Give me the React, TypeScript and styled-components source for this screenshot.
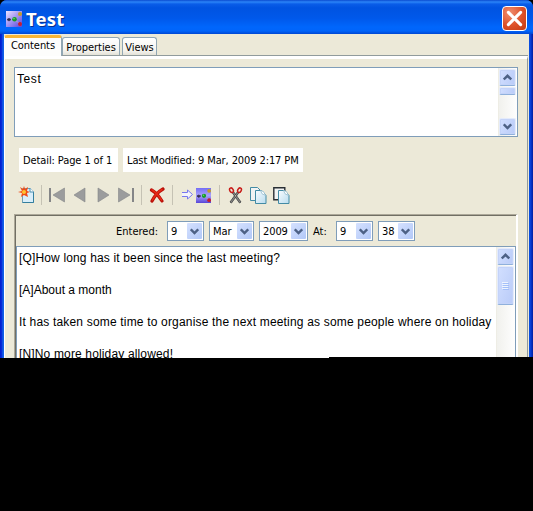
import React from "react";
import styled, { createGlobalStyle } from "styled-components";

const Global = createGlobalStyle`
  * { box-sizing: border-box; }
  html, body { margin: 0; background: #000; overflow: hidden; }
  svg { display: block; flex: none; }
`;

const Screen = styled.main`
  width: 533px;
  height: 511px;
  background: #000;
  color: #000;
  font: 11px/13px "DejaVu Sans Condensed", "DejaVu Sans", sans-serif;
  white-space: nowrap;
  overflow: hidden;
`;

const Window = styled.section`
  width: 533px;
  height: 358px;
  overflow: hidden;
  display: flex;
  flex-direction: column;
  border-radius: 7px 7px 0 0;
  background: #0a48dc;
  clip-path: polygon(0 0, 100% 0, 100% 357px, 329px 357px, 329px 358px, 0 358px);
`;

const TitleBar = styled.header`
  height: 34px;
  flex: none;
  display: flex;
  align-items: center;
  padding: 3px 6px 0 6px;
  background: linear-gradient(#0a4bd0 0, #2b84f8 2px, #0a5de8 4px, #0053e1 8px, #0058ea 18px, #0066fc 27px, #0064fa 31px, #0047d2 34px);
`;

const Title = styled.h1`
  flex: 1;
  margin: 0 0 0 4px;
  color: #fff;
  font: bold 18.5px/24px "Noto Sans", sans-serif;
  letter-spacing: 0.15px;
  text-shadow: 1px 1px 0 #0b2e8c;
`;

const CloseButton = styled.button`
  width: 25px;
  height: 25px;
  padding: 0;
  display: grid;
  place-items: center;
  border: 1px solid #fff;
  border-radius: 4px;
  background: radial-gradient(circle at 30% 25%, #ef8e70, #dd5028 55%, #c43a12);
`;

const Body = styled.div`
  flex: 1;
  min-height: 0;
  display: flex;
  flex-direction: column;
  border-style: solid;
  border-color: #0c50e0;
  border-width: 0 4px;
  border-image: linear-gradient(90deg, #0019cf 0, #0831d9 2px, #166aee 3px, #0855dd 4px, #0855dd 529px, #0b46e2 530px, #001ea0 533px) 0 4 0 4;
  background: #ece9d8;
`;

const Tabs = styled.nav`
  height: 22px;
  flex: none;
  display: flex;
  align-items: flex-end;
  gap: 2px;
  border-bottom: 1px solid #919b9c;
  margin-right: 1px;
`;

const Tab = styled.div<{ $width: number; $active?: boolean }>`
  width: ${(p) => p.$width}px;
  height: ${(p) => (p.$active ? 21 : 18)}px;
  margin-right: ${(p) => (p.$active ? -2 : 0)}px;
  margin-bottom: ${(p) => (p.$active ? -1 : 0)}px;
  padding-top: ${(p) => (p.$active ? 1 : 3)}px;
  text-align: center;
  letter-spacing: -0.05px;
  border: 1px solid #91a7b4;
  border-bottom: 0;
  border-radius: 3px 3px 0 0;
  border-top: ${(p) => (p.$active ? "3px solid #f9b637" : "1px solid #91a7b4")};
  background: ${(p) => (p.$active ? "#fdfdfc" : "linear-gradient(#fff, #f4f3ee 75%, #e3e1d7)")};
  ${(p) => p.$active && "border-left-color: #fff;"}
`;

const Page = styled.div`
  flex: 1;
  min-height: 0;
  display: flex;
  flex-direction: column;
  align-items: flex-start;
  margin-right: 1px;
  padding: 8px 0 0 9px;
  border-top: 3px solid #fff;
  border-left: 1px solid #fff;
  border-right: 1px solid #919b9c;
`;

const SummaryBox = styled.div`
  width: 504px;
  height: 70px;
  flex: none;
  display: flex;
  justify-content: space-between;
  border: 1px solid #7f9db9;
  background: #fff;
`;

const SummaryText = styled.div`
  padding: 4px 2px;
  font: 12px/14px "Liberation Sans", Arial, sans-serif;
  letter-spacing: 0.6px;
`;

const ScrollBar = styled.div`
  width: 19px;
  flex: none;
  display: flex;
  flex-direction: column;
  padding: 1px 1px 0 0;
  border-left: 1px solid #eeede5;
  background: linear-gradient(90deg, #f1f1ed, #fefefe);
`;

const ScrollButton = styled.div<{ $height?: number; $bottom?: boolean }>`
  width: 17px;
  height: ${(p) => p.$height ?? 17}px;
  flex: none;
  display: grid;
  place-items: center;
  margin-top: ${(p) => (p.$bottom ? "auto" : "0")};
  margin-bottom: 1px;
  border: 1px solid #e4ebfb;
  border-bottom-color: #8fb0dc;
  border-radius: 2px;
  box-shadow: inset 0 0 0 1px #c4d3f8;
  background: linear-gradient(110deg, #d2dfff, #b9cbf8);
`;

const Labels = styled.div`
  display: flex;
  gap: 5px;
  margin: 11px 0 0 5px;
`;

const InfoLabel = styled.div<{ $width: number }>`
  width: ${(p) => p.$width}px;
  height: 24px;
  padding: 6px 4px 0;
  letter-spacing: -0.1px;
  background: #fff;
`;

const Toolbar = styled.div`
  height: 42px;
  flex: none;
  display: grid;
  grid-template-columns: 23px 8px 24px 20px 24px 24px 8px 23px 10px 37px 9px 22px 23px 18px;
  align-items: center;
  padding: 4px 0 0 4px;
`;

const Separator = styled.i`
  width: 1px;
  height: 20px;
  background: #c5c2b4;
`;

const Detail = styled.div`
  width: 504px;
  flex: 1;
  min-height: 0;
  display: flex;
  flex-direction: column;
  padding: 1px 0 0 1px;
  border: 1px solid #aca899;
  border-right: 2px solid #fff;
  border-bottom: 0;
  box-shadow: inset 1px 1px 0 #716f64;
`;

const DateRow = styled.div`
  height: 30px;
  flex: none;
  display: flex;
  align-items: center;
  gap: 5px;
  padding-left: 100px;
`;

const DateLabel = styled.span<{ $width: number }>`
  width: ${(p) => p.$width}px;
`;

const Combo = styled.div<{ $width: number }>`
  width: ${(p) => p.$width}px;
  height: 20px;
  display: flex;
  align-items: center;
  justify-content: space-between;
  padding: 0 1px 0 3px;
  border: 1px solid #7f9db9;
  background: #fff;
  letter-spacing: -0.1px;
`;

const ComboArrow = styled.span`
  width: 15px;
  height: 16px;
  display: grid;
  place-items: center;
  border-radius: 1px;
  background: linear-gradient(135deg, #d5e1ff, #b2c8f7);
`;

const Notes = styled.div`
  width: 500px;
  flex: 1;
  min-height: 0;
  display: flex;
  justify-content: space-between;
  border: 1px solid #7f9db9;
  border-bottom: 0;
  background: #fff;
`;

const NoteText = styled.div`
  flex: 1;
  padding: 3px 2px;
  font: 12px/16px "Liberation Sans", Arial, sans-serif;
`;

const NoteLine = styled.p<{ $spacing: number }>`
  margin: 0 0 16px;
  letter-spacing: ${(p) => p.$spacing}px;
`;

const Chevron = ({ up }: { up?: boolean }) => (
  <svg width="9" height="7" viewBox="0 0 9 7">
    <path d={up ? "M.8 5.5 4.5 1.8 8.2 5.5" : "M.8 1.3 4.5 5 8.2 1.3"} fill="none" stroke="#4d6185" strokeWidth="2.4" />
  </svg>
);

const MapIcon = ({ size = 16 }: { size?: number }) => (
  <svg width={size} height={size} viewBox="0 0 16 16">
    <defs>
      <linearGradient id={`mapFill${size}`} x2={size === 16 ? "1" : "0"} y2="1">
        <stop stopColor={size === 16 ? "#eee3ff" : "#746df5"} />
        <stop offset=".5" stopColor={size === 16 ? "#a092f2" : "#aaa3fb"} />
        <stop offset="1" stopColor="#5745d8" />
      </linearGradient>
    </defs>
    <path fill={`url(#mapFill${size})`} d="M0 0h16v16H0z" />
    <path d="m9 8 5-4M9 9l4 3" fill="none" stroke="#a9a0cf" />
    <path d="M1 8.5 3 7.5l2 1-2 1.5z" fill="#2e2946" stroke="#3d375c" />
    <circle cx="8.5" cy="8.3" r="2.3" fill="#159b25" />
    <circle cx="8" cy="7.6" r=".8" fill="#6bd46e" />
    <circle cx="14" cy="3" r="2" fill="#c29b27" />
    <circle cx="14" cy="13" r="2" fill="#c51d2f" />
  </svg>
);

const NewPageIcon = () => (
  <svg width="17" height="18" viewBox="0 0 17 18">
    <path d="M4.5 2.5h8l3 3v11h-11z" fill="#d9eefa" stroke="#6f9fb6" />
    <path d="M15.5 6v10.5h-11" fill="none" stroke="#347f9e" />
    <path d="M12 2v4h4" fill="#f8fdff" stroke="#4a8eae" />
    <path d="m6 0 1 3 3-2-1 4 3 1-3 1 1 4-4-2-3 2 1-4-4-1 4-1-2-4 3 2z" fill="#f04c16" />
    <circle cx="6" cy="6" r="2" fill="#ffc331" />
  </svg>
);

const NavIcon = ({ right, bar }: { right?: boolean; bar?: boolean }) => (
  <svg width="17" height="16" viewBox="0 0 17 16">
    <g transform={right ? "matrix(-1 0 0 1 17 0)" : undefined}>
      {bar && <path d="M0 1h2v14H0z" fill="#858688" />}
      <path d={bar ? "M15.5 1v14L4 8z" : "M12 1v14L1 8z"} fill="#9b9c9d" stroke="#858688" strokeWidth=".6" />
    </g>
  </svg>
);

const DeleteIcon = () => (
  <svg width="17" height="17" viewBox="0 0 17 17">
    <path d="M2.5 3Q8 6 13 14M14 2Q7 6 3 14" fill="none" stroke="#b90f08" strokeWidth="3.2" strokeLinecap="round" />
    <path d="M3 3Q8 6 12.5 13M13 2.5Q7 6 3.5 13" fill="none" stroke="#e62a18" strokeWidth="1.5" strokeLinecap="round" />
  </svg>
);

const MapGroup = styled.span`
  display: flex;
  align-items: center;
  gap: 3px;
`;

const ArrowIcon = () => (
  <svg width="11" height="12" viewBox="0 0 11 12">
    <path d="M0 3.5h5.5V1l5 4.5-5 4.5V7.5H0" fill="#f3f3fb" stroke="#7777ee" />
  </svg>
);

const CutIcon = () => (
  <svg width="15" height="17" viewBox="0 0 15 17">
    <path d="m4 5.5 1.8-.5L13 15l-1.5 1zm7 0L9.200 5 2 15l1.500 1z" fill="#888" stroke="#48494a" strokeWidth=".9" />
    <ellipse cx="3.500" cy="3.200" rx="1.700" ry="2.400" transform="rotate(-30 3.5 3.2)" fill="none" stroke="#c81b18" strokeWidth="1.500" />
    <ellipse cx="11.500" cy="3.200" rx="1.700" ry="2.400" transform="rotate(30 11.5 3.2)" fill="none" stroke="#c81b18" strokeWidth="1.500" />
  </svg>
);

const CopyIcon = ({ paste }: { paste?: boolean }) => (
  <svg width="17" height="17" viewBox="0 0 17 17">
    <defs>
      <linearGradient id={paste ? "pasteSheet" : "copySheet"} x2="1" y2="1">
        <stop stopColor="#f8fcff" />
        <stop offset="1" stopColor="#b9dcee" />
      </linearGradient>
    </defs>
    <path
      d={paste ? "M.8.8h11v12H.8z" : "M.5.5h7l3 3v10H.5z"}
      fill="#f1f3f3"
      stroke={paste ? "#292f34" : "#438ba4"}
      strokeWidth={paste ? 1.4 : 1}
    />
    <path d="M5.500 3.500h6l4.500 5v8H5.500z" fill={`url(#${paste ? "pasteSheet" : "copySheet"})`} stroke="#438ba4" />
    <path d="M10.500 3.500q.5 4 5 5l-2-4z" fill="#fff" stroke="#8fbacd" strokeWidth=".8" />
  </svg>
);

export default function App() {
  return (
    <>
      <Global />
      <Screen>
        <Window>
          <TitleBar>
            <MapIcon />
            <Title>Test</Title>
            <CloseButton aria-label="Close">
              <svg width="19" height="19" viewBox="0 0 17 17">
                <path d="m3 3 11 11M14 3 3 14" stroke="#fff" strokeWidth="2.7" strokeLinecap="round" />
              </svg>
            </CloseButton>
          </TitleBar>
          <Body>
            <Tabs>
              <Tab $width={58} $active>Contents</Tab>
              <Tab $width={58}>Properties</Tab>
              <Tab $width={35}>Views</Tab>
            </Tabs>
            <Page>
              <SummaryBox>
                <SummaryText>Test</SummaryText>
                <ScrollBar>
                  <ScrollButton><Chevron up /></ScrollButton>
                  <ScrollButton $height={8} />
                  <ScrollButton $bottom><Chevron /></ScrollButton>
                </ScrollBar>
              </SummaryBox>
              <Labels>
                <InfoLabel $width={99}>Detail: Page 1 of 1</InfoLabel>
                <InfoLabel $width={180}>Last Modified: 9 Mar, 2009 2:17 PM</InfoLabel>
              </Labels>
              <Toolbar>
                <NewPageIcon />
                <Separator />
                <NavIcon bar />
                <NavIcon />
                <NavIcon right />
                <NavIcon right bar />
                <Separator />
                <DeleteIcon />
                <Separator />
                <MapGroup><ArrowIcon /><MapIcon size={15} /></MapGroup>
                <Separator />
                <CutIcon />
                <CopyIcon />
                <CopyIcon paste />
              </Toolbar>
              <Detail>
                <DateRow>
                  <DateLabel $width={46}>Entered:</DateLabel>
                  <Combo $width={37}>9<ComboArrow><Chevron /></ComboArrow></Combo>
                  <Combo $width={45}>Mar<ComboArrow><Chevron /></ComboArrow></Combo>
                  <Combo $width={49}>2009<ComboArrow><Chevron /></ComboArrow></Combo>
                  <DateLabel $width={18}>At:</DateLabel>
                  <Combo $width={37}>9<ComboArrow><Chevron /></ComboArrow></Combo>
                  <Combo $width={37}>38<ComboArrow><Chevron /></ComboArrow></Combo>
                </DateRow>
                <Notes>
                  <NoteText>
                    <NoteLine $spacing={0.15}>[Q]How long has it been since the last meeting?</NoteLine>
                    <NoteLine $spacing={0}>[A]About a month</NoteLine>
                    <NoteLine $spacing={0.18}>It has taken some time to organise the next meeting as some people where on holiday</NoteLine>
                    <NoteLine $spacing={0.15}>[N]No more holiday allowed!</NoteLine>
                  </NoteText>
                  <ScrollBar>
                    <ScrollButton><Chevron up /></ScrollButton>
                    <ScrollButton $height={39}>
                      <svg width="7" height="8" viewBox="0 0 7 8">
                        <path d="M0 .5h6M0 2.5h6M0 4.5h6M0 6.5h6" stroke="#eef4fe" />
                        <path d="M1 1.5h6M1 3.5h6M1 5.5h6M1 7.5h6" stroke="#8cb0f8" strokeOpacity=".6" />
                      </svg>
                    </ScrollButton>
                  </ScrollBar>
                </Notes>
              </Detail>
            </Page>
          </Body>
        </Window>
      </Screen>
    </>
  );
}
